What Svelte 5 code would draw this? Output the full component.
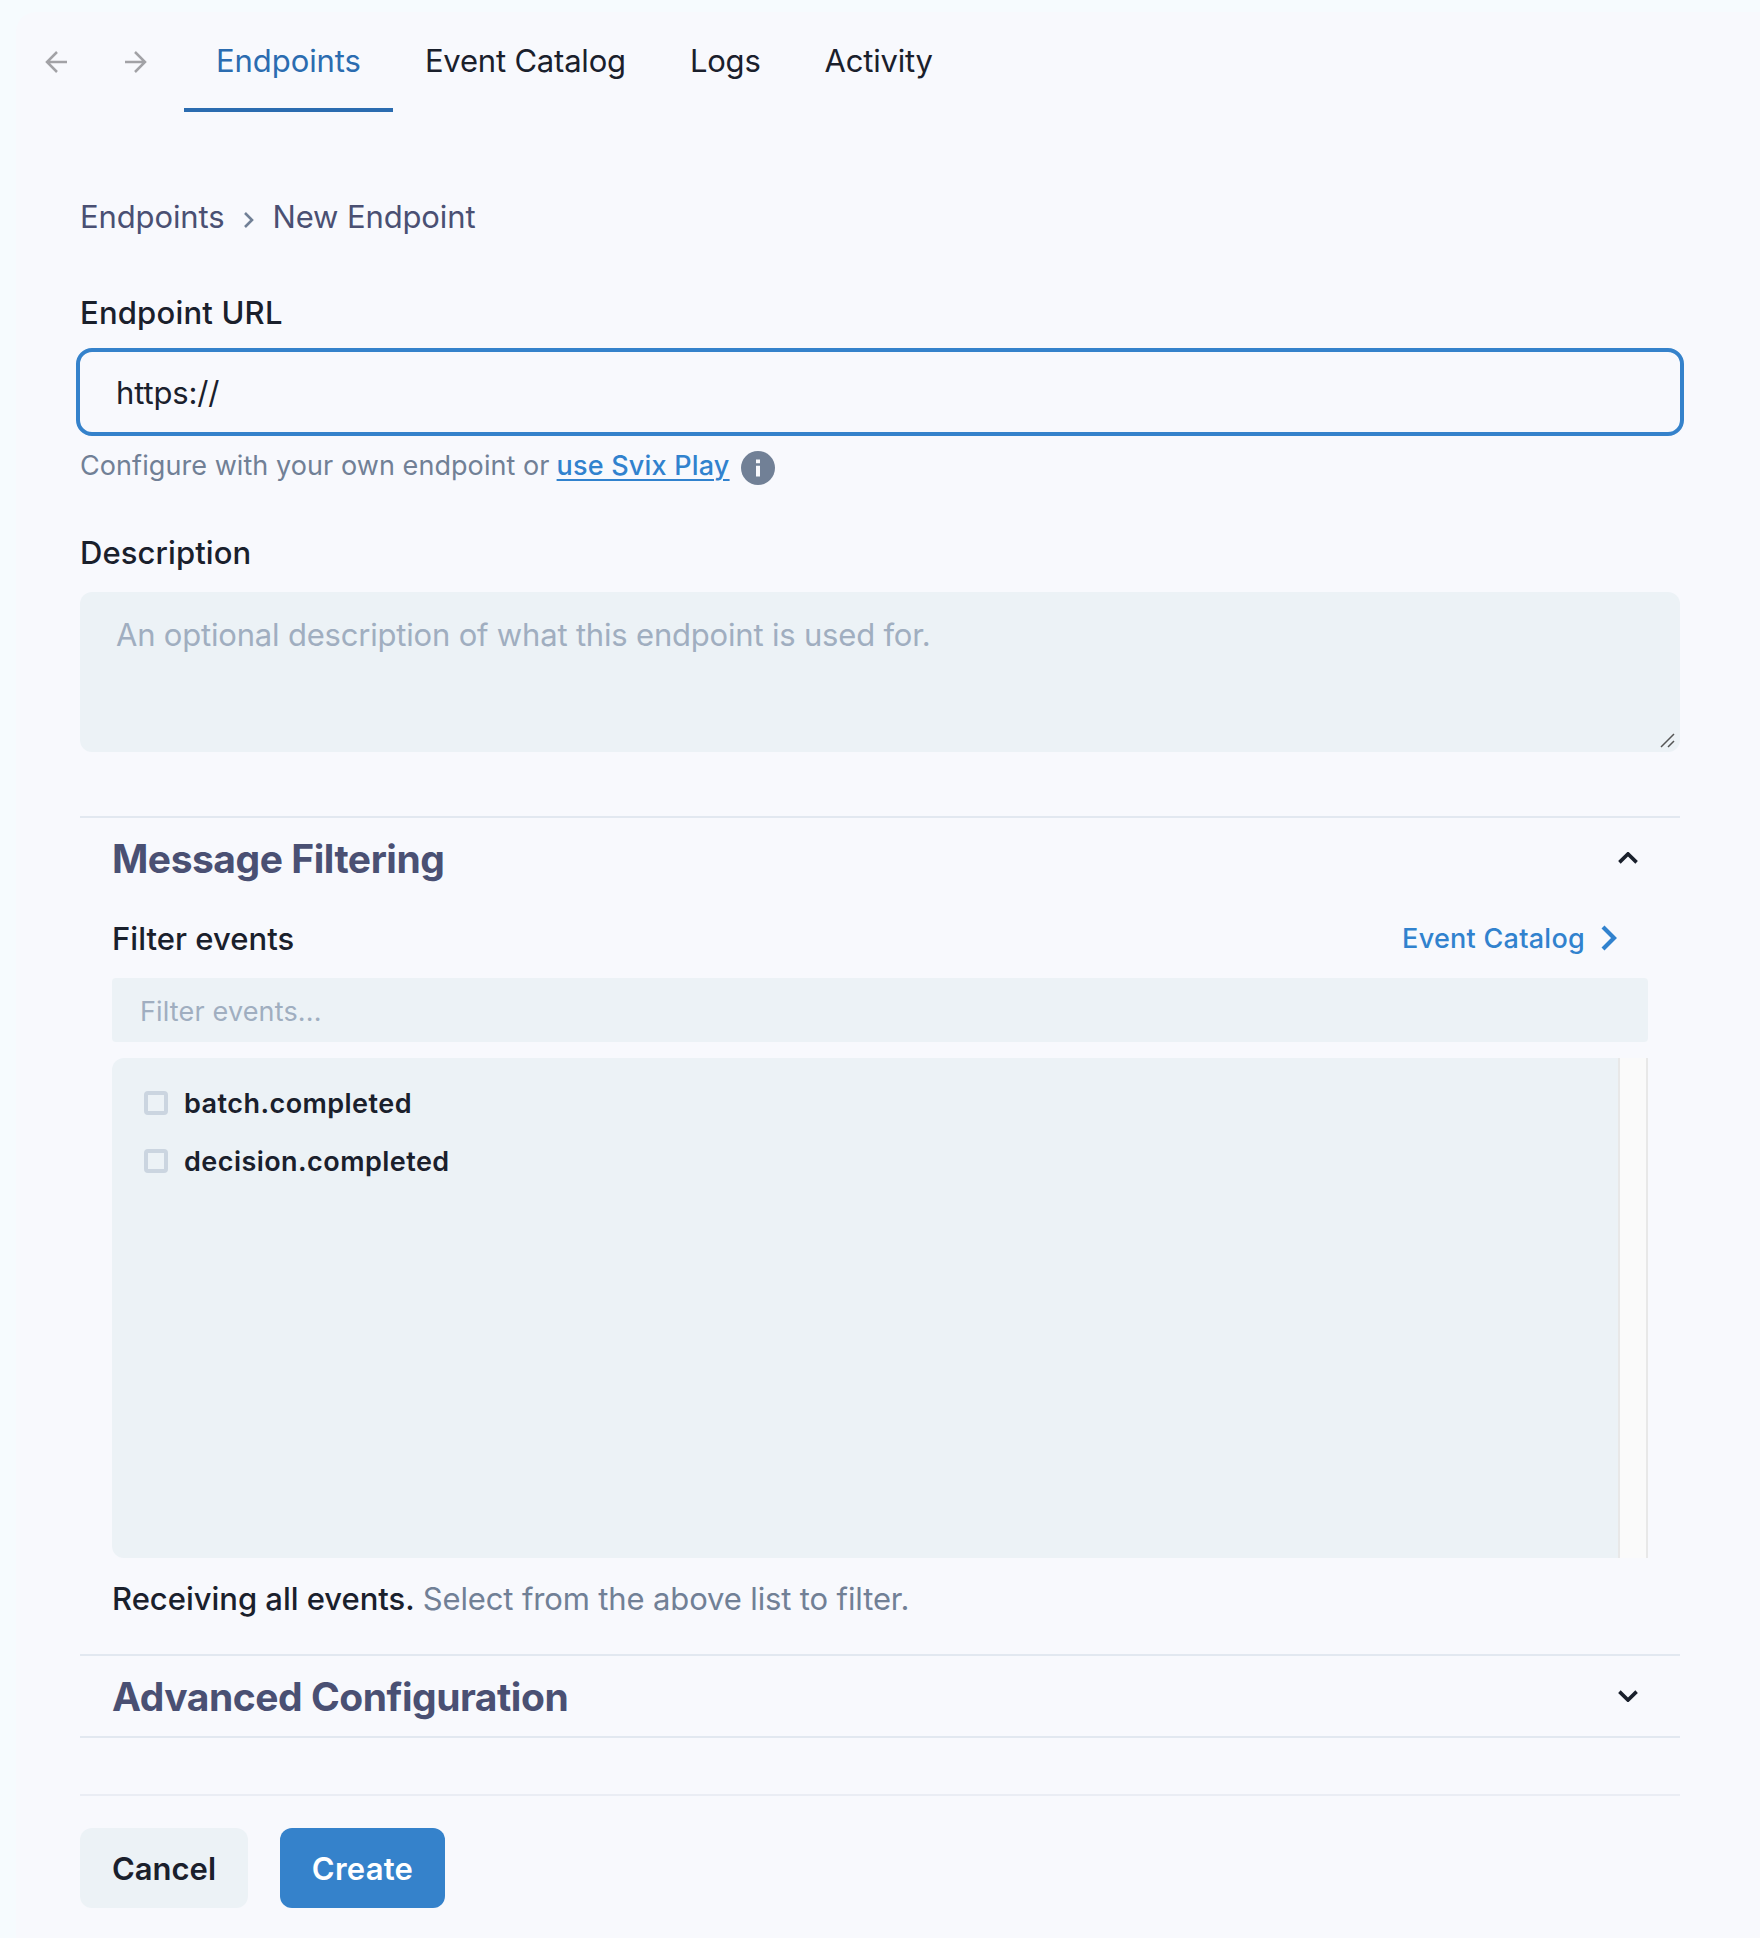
<script lang="ts">
	interface EventType {
		name: string;
		checked: boolean;
	}

	const tabs = ['Endpoints', 'Event Catalog', 'Logs', 'Activity'];

	let activeTab = $state('Endpoints');
	let url = $state('https://');
	let description = $state('');
	let filter = $state('');
	let filteringOpen = $state(true);
	let advancedOpen = $state(false);
	let events = $state<EventType[]>([
		{ name: 'batch.completed', checked: false },
		{ name: 'decision.completed', checked: false }
	]);

	const visibleEvents = $derived(events.filter((e) => e.name.includes(filter)));
</script>

{#snippet chevron(open: boolean)}
	<svg class="toggle" class:open width="20" height="12" viewBox="0 0 20 12" fill="none">
		<path d="M1.4 1.6 10 10.1l8.6-8.5" stroke="currentColor" stroke-width="3.6" />
	</svg>
{/snippet}

<div class="page">
	<div class="panel">
		<nav class="topbar">
			<button class="nav-arrow" aria-label="Back">
				<svg width="22" height="22" viewBox="0 0 22 22" fill="none" stroke="currentColor" stroke-width="2.5">
					<path d="M22 11H2M12 1 2 11l10 10" />
				</svg>
			</button>
			<button class="nav-arrow" aria-label="Forward">
				<svg width="22" height="22" viewBox="0 0 22 22" fill="none" stroke="currentColor" stroke-width="2.5">
					<path d="M0 11h20M10 1l10 10-10 10" />
				</svg>
			</button>
			<div class="tabs">
				{#each tabs as tab}
					<button class="tab" class:active={tab === activeTab} onclick={() => (activeTab = tab)}>
						{tab}
					</button>
				{/each}
			</div>
		</nav>

		<main>
			<div class="breadcrumb">
				<span>Endpoints</span>
				<svg width="10" height="16" viewBox="0 0 10 16" fill="none">
					<path d="M1 1l7 7-7 7" stroke="currentColor" stroke-width="2.6" />
				</svg>
				<span>New Endpoint</span>
			</div>

			<label class="label" for="url">Endpoint URL</label>
			<input id="url" class="url" bind:value={url} />
			<div class="helper">
				<span class="helper-text">Configure with your own endpoint or</span>
				<a href="#play">use Svix Play</a>
				<svg width="34" height="34" viewBox="0 0 34 34">
					<circle cx="17" cy="17" r="17" fill="#718096" />
					<path d="M15 8.5h4v3.7h-4zM15 14.8h4v10.7h-4z" fill="#f8f9fd" />
				</svg>
			</div>

			<label class="label description-label" for="description">Description</label>
			<div class="description">
				<textarea
					id="description"
					placeholder="An optional description of what this endpoint is used for."
					bind:value={description}
				></textarea>
				<svg class="grip" width="15" height="15" viewBox="0 0 15 15" fill="none">
					<path d="M1 14 14 1M8 14l6-6" stroke="#555" stroke-width="1.5" />
				</svg>
			</div>

			<section class="filtering">
				<button class="section-header" onclick={() => (filteringOpen = !filteringOpen)}>
					<span class="section-title">Message Filtering</span>
					{@render chevron(filteringOpen)}
				</button>
				{#if filteringOpen}
					<div class="section-body">
						<div class="filter-header">
							<span class="filter-label">Filter events</span>
							<a class="catalog-link" href="#catalog">
								<span>Event Catalog</span>
								<svg width="16" height="26" viewBox="0 0 16 26" fill="none">
									<path d="M2 2l11 11L2 24" stroke="currentColor" stroke-width="4.2" />
								</svg>
							</a>
						</div>
						<input class="filter" placeholder="Filter events..." bind:value={filter} />
						<div class="events">
							<div class="event-list">
								{#each visibleEvents as event}
									<label class="event">
										<input type="checkbox" bind:checked={event.checked} />
										<span>{event.name}</span>
									</label>
								{/each}
							</div>
							<div class="scroll-track"></div>
						</div>
						<p class="summary">
							<strong>Receiving all events.</strong>
							<span>Select from the above list to filter.</span>
						</p>
					</div>
				{/if}
			</section>

			<section class="advanced">
				<button class="section-header" onclick={() => (advancedOpen = !advancedOpen)}>
					<span class="section-title">Advanced Configuration</span>
					{@render chevron(advancedOpen)}
				</button>
			</section>

			<footer>
				<button class="btn cancel">Cancel</button>
				<button class="btn create">Create</button>
			</footer>
		</main>
	</div>
</div>

<style>
	:global(body) {
		background: #f6fbfe;
	}

	.page {
		box-sizing: border-box;
		height: 1938px;
		padding: 12px 0 0 16px;
		overflow: hidden;
		background: #f6fbfe;
		color: #1a202c;
		font-family: Inter, 'Liberation Sans', sans-serif;
		font-size: 31px;
		line-height: 40px;
	}

	button, input, textarea {
		margin: 0;
		padding: 0;
		border: 0;
		background: none;
		color: inherit;
		font: inherit;
		letter-spacing: inherit;
		box-sizing: border-box;
		outline: none;
	}

	a { color: #3182ce; }
	svg { display: block; flex: none; }

	.panel {
		height: 1926px;
		background: #f8f9fd;
		border-radius: 20px 0 0 0;
	}

	.topbar {
		display: flex;
		height: 100px;
	}

	.nav-arrow {
		display: flex;
		align-items: center;
		width: 80px;
		padding-left: 29px;
		color: #a2a2a6;
	}

	.tabs {
		display: flex;
		margin-left: 8px;
	}

	.tab {
		padding: 2px 32px 0;
		border-bottom: 4px solid transparent;
		letter-spacing: -0.2px;
		white-space: nowrap;
	}
	.tab.active {
		color: #2b6cb0;
		border-bottom-color: #2b6cb0;
		letter-spacing: -0.07px;
	}

	main {
		display: flex;
		flex-direction: column;
		padding: 85px 80px 0 64px;
	}

	.breadcrumb {
		display: flex;
		align-items: center;
		height: 40px;
		margin-bottom: 56px;
		color: #4a5073;
		letter-spacing: -0.12px;
	}
	.breadcrumb svg {
		margin: 6px 18px 0 20px;
		color: #718096;
	}

	.label {
		height: 40px;
		font-weight: 500;
		letter-spacing: 0.2px;
	}

	.url {
		height: 88px;
		margin: 15px -4px 0;
		padding: 0 36px;
		border: 4px solid #3582cb;
		border-radius: 16px;
		letter-spacing: -0.15px;
	}

	.helper {
		display: flex;
		align-items: center;
		height: 60px;
		font-size: 27px;
		letter-spacing: 0.07px;
	}
	.helper-text { color: #718096; }
	.helper a {
		margin-left: 7px;
		font-weight: 500;
		letter-spacing: 0.2px;
		text-underline-offset: 4px;
		text-decoration-thickness: 2px;
	}
	.helper svg { margin: 4px 0 0 11px; }

	.description-label {
		margin-top: 37px;
		letter-spacing: 0.1px;
	}

	.description {
		position: relative;
		height: 160px;
		margin-top: 19px;
	}
	textarea {
		display: block;
		width: 100%;
		height: 100%;
		padding: 23px 36px;
		border-radius: 12px;
		background: #ecf2f6;
		letter-spacing: -0.19px;
		resize: none;
	}
	.grip {
		position: absolute;
		right: 5px;
		bottom: 4px;
	}
	::placeholder {
		color: #a0aec0;
		opacity: 1;
	}

	.filtering {
		height: 838px;
		margin-top: 64px;
		box-sizing: border-box;
		border-top: 2px solid #e2e8f0;
	}

	.section-header {
		display: flex;
		align-items: center;
		justify-content: space-between;
		width: 100%;
		height: 80px;
		padding: 0 42px 0 32px;
	}
	.section-title {
		padding-top: 2px;
		color: #4a5073;
		font-size: 39px;
		font-weight: 700;
		letter-spacing: -0.47px;
	}
	.toggle.open { transform: rotate(180deg); }

	.section-body { padding: 0 32px; }

	.filter-header {
		display: flex;
		align-items: center;
		justify-content: space-between;
		height: 80px;
	}
	.filter-label {
		padding-top: 2px;
		font-weight: 500;
		letter-spacing: 0.04px;
	}
	.catalog-link {
		display: flex;
		align-items: center;
		gap: 16px;
		margin-right: 31px;
		font-size: 27px;
		font-weight: 500;
		letter-spacing: 0.27px;
		text-decoration: none;
	}
	.catalog-link span { padding-top: 2px; }

	.filter {
		display: block;
		width: 100%;
		height: 64px;
		padding: 2px 28px 0;
		border-radius: 4px;
		background: #ecf2f6;
		font-size: 27px;
		letter-spacing: 0.15px;
	}

	.events {
		display: flex;
		height: 500px;
		margin-top: 16px;
		border-radius: 12px 0 0 12px;
		background: #ecf2f6;
		overflow: hidden;
	}
	.event-list {
		flex: 1;
		padding: 16px 32px;
	}
	.event {
		display: flex;
		align-items: center;
		height: 58px;
		gap: 16px;
		font-size: 27px;
		font-weight: 600;
		letter-spacing: 0.45px;
	}
	.event span { padding-top: 2px; }
	.event input {
		appearance: none;
		width: 24px;
		height: 24px;
		border: 4px solid #cbd5e0;
		border-radius: 4px;
	}
	.event input:checked {
		border-color: #3182ce;
		background: #3182ce;
	}
	.scroll-track {
		box-sizing: border-box;
		width: 30px;
		border: solid #e8e8e8;
		border-width: 0 2px;
		background: #fafafa;
	}

	.summary {
		display: flex;
		gap: 8px;
		margin: 21px 0 0;
		white-space: nowrap;
	}
	.summary strong {
		font-weight: 500;
		letter-spacing: -0.02px;
	}
	.summary span {
		color: #718096;
		letter-spacing: -0.13px;
	}

	.advanced {
		border: solid #e2e8f0;
		border-width: 2px 0;
	}

	footer {
		display: flex;
		gap: 32px;
		margin-top: 56px;
		padding-top: 32px;
		border-top: 2px solid #eaedf4;
	}

	.btn {
		height: 80px;
		padding-top: 2px;
		border-radius: 12px;
		font-weight: 600;
	}
	.cancel {
		width: 168px;
		background: #ecf2f6;
	}
	.create {
		width: 165px;
		background: #3582cb;
		color: #fff;
		letter-spacing: 0.25px;
	}
</style>
